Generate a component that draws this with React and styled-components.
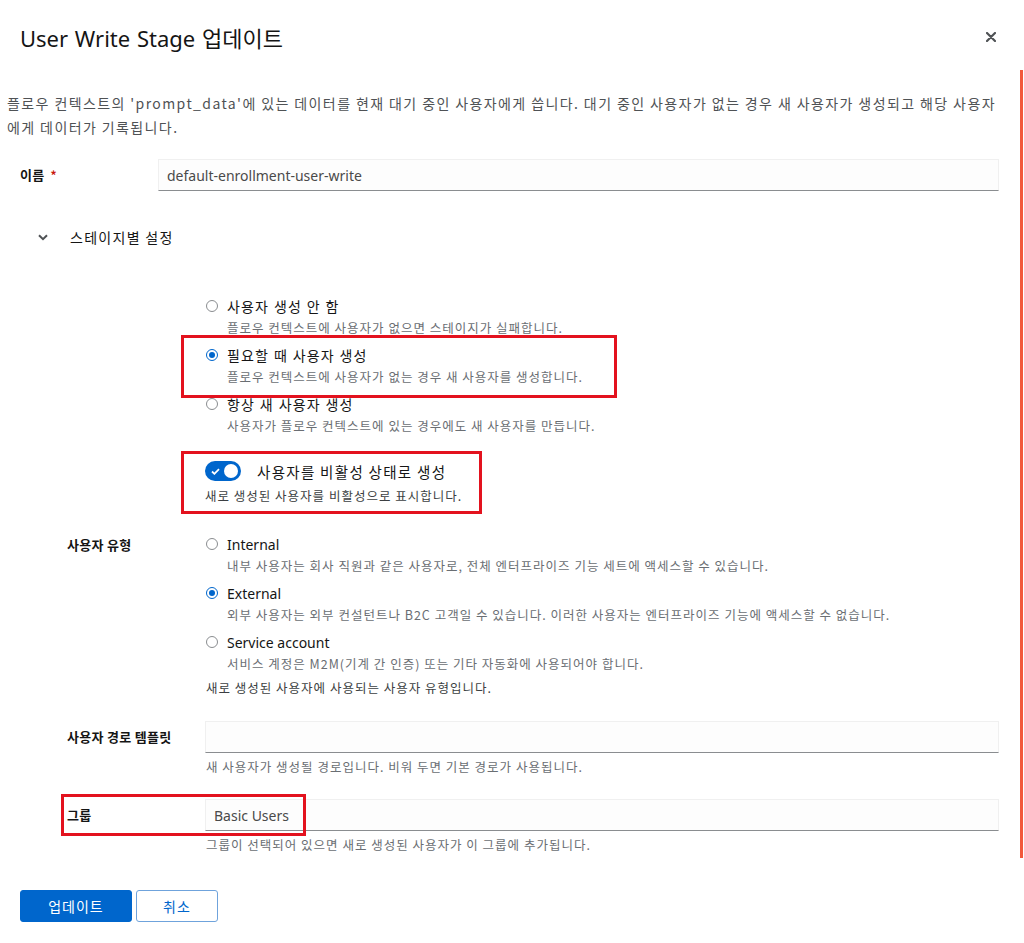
import React from "react";
import styled, { createGlobalStyle } from "styled-components";

const Global = createGlobalStyle`
  html, body { margin: 0; padding: 0; background: #fff; }
  body {
    font-family: "Noto Sans", "Noto Sans CJK KR", sans-serif;
    color: #151515;
  }
  * { box-sizing: border-box; }
`;

const Modal = styled.div`
  position: relative;
  width: 1024px;
  min-height: 943px;
  background: #fff;
`;

const ScrollMark = styled.div`
  position: absolute;
  right: 1px;
  top: 70px;
  width: 3px;
  height: 788px;
  background: #f2583b;
`;

const Header = styled.header`
  display: flex;
  align-items: center;
  justify-content: space-between;
  padding: 18px 26px 0 20px;
  height: 56px;
`;

const Title = styled.h1`
  margin: 0;
  font-family: "Noto Sans", "Noto Sans CJK KR", sans-serif;
  font-size: 22px;
  font-weight: 400;
  word-spacing: 1px;
  color: #151515;
`;

const Close = styled.button`
  border: 0;
  background: none;
  padding: 0;
  width: 14px;
  height: 14px;
  display: flex;
  align-items: center;
  justify-content: center;
  color: #4f5255;
`;

const Body = styled.div`
  padding: 0 25px 0 0;
`;

const Lead = styled.p`
  margin: 35px 0 0 7px;
  font-size: 14px;
  line-height: 24px;
  letter-spacing: 1.4px;
  color: #4f5255;
  font-family: "Noto Sans CJK KR", sans-serif;
`;

const Row = styled.div`
  display: grid;
  grid-template-columns: 138px 1fr;
  margin-left: ${(p) => p.$indent || 0}px;
  margin-top: ${(p) => p.$top || 0}px;
  align-items: start;
`;

const Label = styled.label`
  font-family: "Noto Sans CJK KR", sans-serif;
  font-size: 13px;
  font-weight: 600;
  letter-spacing: 0.3px;
  color: #151515;
  line-height: ${(p) => (p.$inline ? 20 : 32)}px;
`;

const Req = styled.span`
  color: #c9190b;
  margin-left: 6px;
  font-size: 12px;
`;

const Input = styled.div`
  height: 32px;
  background: #fdfdfd;
  border: 1px solid #f0f0f0;
  border-bottom-color: #8a8d90;
  padding: 0 8px;
  display: flex;
  align-items: center;
  font-size: 14px;
  color: #4a4a4a;
  font-family: "Noto Sans", "Noto Sans CJK KR", sans-serif;
`;

const Helper = styled.div`
  font-family: "Noto Sans CJK KR", sans-serif;
  font-size: 12.5px;
  letter-spacing: 1px;
  line-height: 18px;
  color: ${(p) => (p.$dark ? "#3c3f42" : "#6a6e73")};
  margin-top: ${(p) => p.$top ?? 5}px;
  padding-left: ${(p) => p.$pad ?? 1}px;
`;

const Expander = styled.div`
  display: flex;
  align-items: center;
  gap: 21px;
  margin: 36px 0 0 37px;
  height: 20px;
  font-family: "Noto Sans CJK KR", sans-serif;
  font-size: 14px;
  letter-spacing: 1.3px;
  color: #151515;
`;

const Chevron = styled.span`
  width: 12px;
  display: flex;
  justify-content: center;
  color: #4f5255;
`;

const Options = styled.div`
  display: flex;
  flex-direction: column;
  gap: 9px;
`;

const Option = styled.div`
  position: relative;
`;

const OptionHead = styled.div`
  display: flex;
  align-items: center;
  gap: 9px;
  height: 18px;
  padding-left: 1px;
`;

const Radio = styled.span`
  width: 12px;
  height: 12px;
  border-radius: 50%;
  border: 1px solid ${(p) => (p.$on ? "#0066cc" : "#8a8d90")};
  background: #fff;
  display: flex;
  align-items: center;
  justify-content: center;
  flex: none;
  &::after {
    content: "";
    width: 6px;
    height: 6px;
    border-radius: 50%;
    background: ${(p) => (p.$on ? "#0066cc" : "transparent")};
  }
`;

const OptionText = styled.span`
  font-family: "Noto Sans", "Noto Sans CJK KR", sans-serif;
  font-size: 14px;
  letter-spacing: ${(p) => (p.$ko ? 1.15 : 0)}px;
  color: #151515;
`;

const OptionDesc = styled.div`
  font-family: "Noto Sans CJK KR", sans-serif;
  font-size: 12.5px;
  letter-spacing: 1px;
  line-height: 18px;
  color: #6a6e73;
  margin-top: 4px;
  padding-left: 22px;
`;

const Mark = styled.span`
  position: absolute;
  pointer-events: none;
  border: 3px solid #e3121e;
  top: ${(p) => p.$t}px;
  left: ${(p) => p.$l}px;
  width: ${(p) => p.$w}px;
  height: ${(p) => p.$h}px;
`;

const SwitchRow = styled.div`
  display: flex;
  align-items: center;
  gap: 16px;
  height: 20px;
`;

const SwitchText = styled.span`
  font-family: "Noto Sans CJK KR", sans-serif;
  font-size: 14.5px;
  letter-spacing: 1.3px;
  color: #151515;
`;

const Switch = styled.span`
  width: 36px;
  height: 20px;
  border-radius: 10px;
  background: #0066cc;
  display: flex;
  align-items: center;
  justify-content: space-between;
  padding: 0 3px 0 6px;
  flex: none;
  &::after {
    content: "";
    width: 14px;
    height: 14px;
    border-radius: 50%;
    background: #fff;
  }
`;

const Footer = styled.div`
  display: flex;
  gap: 4px;
  margin: 36px 0 0 20px;
`;

const Button = styled.button`
  height: 32px;
  min-width: ${(p) => p.$w}px;
  border-radius: 3px;
  font-family: "Noto Sans CJK KR", sans-serif;
  font-size: 14px;
  letter-spacing: 1px;
  cursor: pointer;
  background: ${(p) => (p.$primary ? "#0066cc" : "#fff")};
  color: ${(p) => (p.$primary ? "#fff" : "#0066cc")};
  border: 1px solid ${(p) => (p.$primary ? "#0066cc" : "#6fa3dc")};
`;

const RadioOption = ({ on, label, desc, ko }) => (
  <>
    <OptionHead>
      <Radio $on={on} />
      <OptionText $ko={ko}>{label}</OptionText>
    </OptionHead>
    <OptionDesc>{desc}</OptionDesc>
  </>
);

export default function App() {
  return (
    <Modal>
      <Global />
      <ScrollMark />
      <Header>
        <Title>User Write Stage 업데이트</Title>
        <Close aria-label="닫기">
          <svg width="10" height="10" viewBox="0 0 10 10">
            <path d="M1 1 L9 9 M9 1 L1 9" stroke="#4f5255" strokeWidth="2.2" strokeLinecap="round" />
          </svg>
        </Close>
      </Header>
      <Body>
        <Lead>
          플로우 컨텍스트의 'prompt_data'에 있는 데이터를 현재 대기 중인 사용자에게 씁니다. 대기 중인 사용자가 없는 경우 새 사용자가 생성되고 해당 사용자에게 데이터가 기록됩니다.
        </Lead>

        <Row $indent={20} $top={20}>
          <Label>
            이름<Req>*</Req>
          </Label>
          <Input>default-enrollment-user-write</Input>
        </Row>

        <Expander>
          <Chevron>
            <svg width="10" height="7" viewBox="0 0 10 7">
              <path d="M1 1.2 L5 5.2 L9 1.2" fill="none" stroke="#4f5255" strokeWidth="2" />
            </svg>
          </Chevron>
          스테이지별 설정
        </Expander>

        <Row $indent={67} $top={50}>
          <span />
          <Options>
            <Option>
              <RadioOption ko on={false} label="사용자 생성 안 함" desc="플로우 컨텍스트에 사용자가 없으면 스테이지가 실패합니다." />
            </Option>
            <Option>
              <Mark $t={-11} $l={-24} $w={436} $h={63} />
              <RadioOption ko on label="필요할 때 사용자 생성" desc="플로우 컨텍스트에 사용자가 없는 경우 새 사용자를 생성합니다." />
            </Option>
            <Option>
              <RadioOption ko on={false} label="항상 새 사용자 생성" desc="사용자가 플로우 컨텍스트에 있는 경우에도 새 사용자를 만듭니다." />
            </Option>
          </Options>
        </Row>

        <Row $indent={67} $top={26}>
          <span />
          <Option>
            <Mark $t={-10} $l={-24} $w={301} $h={63} />
            <SwitchRow>
              <Switch>
                <svg width="9" height="7" viewBox="0 0 9 7">
                  <path d="M1 3.5 L3.4 5.8 L8 1.2" fill="none" stroke="#fff" strokeWidth="1.8" />
                </svg>
              </Switch>
              <SwitchText>사용자를 비활성 상태로 생성</SwitchText>
            </SwitchRow>
            <Helper $dark $top={6} $pad={0}>새로 생성된 사용자를 비활성으로 표시합니다.</Helper>
          </Option>
        </Row>

        <Row $indent={67} $top={30}>
          <Label $inline>사용자 유형</Label>
          <div>
            <Options>
              <Option>
                <RadioOption on={false} label="Internal" desc="내부 사용자는 회사 직원과 같은 사용자로, 전체 엔터프라이즈 기능 세트에 액세스할 수 있습니다." />
              </Option>
              <Option>
                <RadioOption on label="External" desc="외부 사용자는 외부 컨설턴트나 B2C 고객일 수 있습니다. 이러한 사용자는 엔터프라이즈 기능에 액세스할 수 없습니다." />
              </Option>
              <Option>
                <RadioOption on={false} label="Service account" desc="서비스 계정은 M2M(기계 간 인증) 또는 기타 자동화에 사용되어야 합니다." />
              </Option>
            </Options>
            <Helper $dark $top={6} $pad={1}>새로 생성된 사용자에 사용되는 사용자 유형입니다.</Helper>
          </div>
        </Row>

        <Row $indent={67} $top={24}>
          <Label>사용자 경로 템플릿</Label>
          <div>
            <Input />
            <Helper>새 사용자가 생성될 경로입니다. 비워 두면 기본 경로가 사용됩니다.</Helper>
          </div>
        </Row>

        <Row $indent={67} $top={23}>
          <Option>
            <Mark $t={-5} $l={-6} $w={245} $h={42} />
            <Label>그룹</Label>
          </Option>
          <div>
            <Input>Basic Users</Input>
            <Helper $top={5}>그룹이 선택되어 있으면 새로 생성된 사용자가 이 그룹에 추가됩니다.</Helper>
          </div>
        </Row>

        <Footer>
          <Button $primary $w={112}>업데이트</Button>
          <Button $w={82}>취소</Button>
        </Footer>
      </Body>
    </Modal>
  );
}
